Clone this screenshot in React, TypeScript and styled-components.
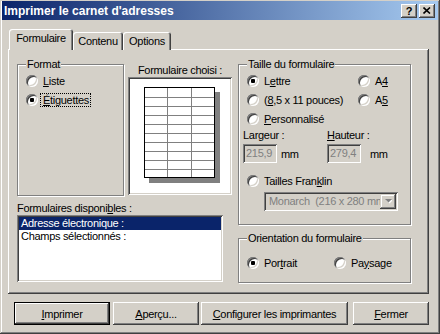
import React from "react";
import styled, { createGlobalStyle } from "styled-components";

const GlobalStyle = createGlobalStyle`
  html, body {
    margin: 0;
    padding: 0;
    background: #d4d0c8;
  }
  body {
    font-family: "Liberation Sans", Arial, sans-serif;
    font-size: 11px;
    letter-spacing: -0.3px;
    color: #000;
  }
  * {
    box-sizing: border-box;
  }
`;

const Window = styled.div`
  width: 440px;
  height: 334px;
  padding: 1px 2px 2px;
  background: #d4d0c8;
  box-shadow: inset -1px -1px 0 #404040, inset 1px 1px 0 #d4d0c8,
    inset -2px -2px 0 #808080, inset 2px 2px 0 #fff;
  display: flex;
  flex-direction: column;
`;

const TitleBar = styled.div`
  height: 19px;
  display: flex;
  align-items: center;
  padding: 0 3px 0 2px;
  background: linear-gradient(to right, #0a246a, #a6caf0);
`;

const Title = styled.span`
  flex: 1;
  color: #fff;
  font-weight: bold;
  font-size: 12px;
  letter-spacing: 0;
  white-space: nowrap;
`;

const CaptionButton = styled.div<{ $ml?: number }>`
  width: 16px;
  height: 14px;
  margin-left: ${(p) => p.$ml ?? 0}px;
  display: flex;
  align-items: center;
  justify-content: center;
  background: #d4d0c8;
  font-weight: bold;
  font-size: 11px;
  letter-spacing: 0;
  box-shadow: inset -1px -1px 0 #404040, inset 1px 1px 0 #fff,
    inset -2px -2px 0 #808080;
`;

const TabRow = styled.div`
  display: flex;
  align-items: flex-end;
  height: 21px;
  margin-top: 9px;
  padding-left: 7px;
  position: relative;
  z-index: 1;
`;

const Tab = styled.div<{ $active?: boolean; $w: number }>`
  width: ${(p) => p.$w}px;
  height: ${(p) => (p.$active ? 21 : 18)}px;
  padding-top: 3px;
  text-align: center;
  line-height: 13px;
  background: #d4d0c8;
  border-radius: 3px 3px 0 0;
  box-shadow: inset 1px 1px 0 #fff, inset -1px 0 0 #404040,
    inset -2px 0 0 #808080;
`;

const Panel = styled.div`
  margin: -1px 9px 0 6px;
  height: 245px;
  padding: 9px 0 0 9px;
  box-shadow: inset -1px -1px 0 #404040, inset 1px 1px 0 #fff,
    inset -2px -2px 0 #808080;
  display: grid;
  grid-template-columns: 215px 173px;
  column-gap: 6px;
  align-items: start;
`;

const Column = styled.div`
  display: flex;
  flex-direction: column;
`;

const TopRow = styled.div`
  display: flex;
  gap: 4px;
`;

const GroupBox = styled.fieldset<{ $w?: number; $h: number; $mb?: number }>`
  margin: 0 0 ${(p) => p.$mb ?? 0}px;
  padding: 0 0 0 8px;
  min-width: 0;
  width: ${(p) => (p.$w ? `${p.$w}px` : "auto")};
  height: ${(p) => p.$h}px;
  border: 1px solid #808080;
  box-shadow: inset 1px 1px 0 #fff, 1px 1px 0 #fff;
`;

const Legend = styled.legend`
  padding: 0 1px;
  line-height: 13px;
  background: #d4d0c8;
`;

const RadioLabel = styled.div`
  display: flex;
  align-items: center;
  height: 19px;
  white-space: nowrap;
`;

const RadioDot = styled.span<{ $checked?: boolean }>`
  position: relative;
  flex: none;
  width: 12px;
  height: 12px;
  margin-right: 2px;
  border-radius: 50%;
  background: #fff;
  box-shadow: inset 1px 1px 0 #808080, inset -1px -1px 0 #fff,
    inset 2px 2px 0 #404040, inset -2px -2px 0 #d4d0c8;

  &::after {
    content: "";
    display: ${(p) => (p.$checked ? "block" : "none")};
    position: absolute;
    left: 4px;
    top: 4px;
    width: 4px;
    height: 4px;
    border-radius: 1px;
    background: #000;
  }
`;

const RadioText = styled.span<{ $focus?: boolean }>`
  padding: 0 1px 0 2px;
  line-height: 12px;
  border: 1px dotted ${(p) => (p.$focus ? "#000" : "transparent")};
`;

const U = styled.span`
  text-decoration: underline;
`;

function Radio({
  checked,
  focus,
  children,
}: {
  checked?: boolean;
  focus?: boolean;
  children: React.ReactNode;
}) {
  return (
    <RadioLabel>
      <RadioDot $checked={checked} />
      <RadioText $focus={focus}>{children}</RadioText>
    </RadioLabel>
  );
}

const PreviewCol = styled.div`
  width: 104px;
  display: flex;
  flex-direction: column;
`;

const Caption = styled.div<{ $center?: boolean; $mt?: number }>`
  margin-top: ${(p) => p.$mt ?? 0}px;
  line-height: 13px;
  height: 13px;
  white-space: nowrap;
  text-align: ${(p) => (p.$center ? "center" : "left")};
`;

const Sunken = styled.div<{ $w?: number; $h: number; $white?: boolean }>`
  width: ${(p) => (p.$w ? `${p.$w}px` : "auto")};
  height: ${(p) => p.$h}px;
  padding: 2px;
  background: ${(p) => (p.$white ? "#fff" : "#d4d0c8")};
  box-shadow: inset 1px 1px 0 #808080, inset -1px -1px 0 #fff,
    inset 2px 2px 0 #404040, inset -2px -2px 0 #d4d0c8;
`;

const ListBox = styled(Sunken)`
  width: 206px;
`;

const ListItem = styled.div<{ $selected?: boolean }>`
  height: 13px;
  line-height: 13px;
  padding-left: 2px;
  white-space: nowrap;
  color: ${(p) => (p.$selected ? "#fff" : "#000")};
  background: ${(p) => (p.$selected ? "#0a246a" : "transparent")};
`;

const RadioGrid = styled.div<{ $cols: string; $pt?: number }>`
  display: grid;
  grid-template-columns: ${(p) => p.$cols};
  padding-top: ${(p) => p.$pt ?? 0}px;
`;

const Wide = styled.div`
  grid-column: 1 / -1;
`;

const SizeGrid = styled.div`
  display: grid;
  grid-template-columns: 84px auto;
  margin: 1px 0 0 -4px;
`;

const InputRow = styled.div<{ $gap: number }>`
  display: flex;
  align-items: center;
  gap: ${(p) => p.$gap}px;
  margin-top: 2px;
`;

const TextInput = styled(Sunken)`
  width: 34px;
  line-height: 15px;
  padding-left: 3px;
  color: #808080;
`;

const FranklinRow = styled.div`
  margin-top: 8px;
`;

const Combo = styled(Sunken)`
  width: 134px;
  margin: 2px 0 0 17px;
  display: flex;
  align-items: center;
  color: #808080;
  white-space: pre;
  overflow: hidden;
`;

const ComboText = styled.span`
  flex: 1;
  overflow: hidden;
  padding-left: 3px;
  line-height: 15px;
`;

const ComboButton = styled.div`
  flex: none;
  width: 16px;
  height: 15px;
  display: flex;
  align-items: center;
  justify-content: center;
  background: #d4d0c8;
  box-shadow: inset -1px -1px 0 #404040, inset 1px 1px 0 #d4d0c8,
    inset -2px -2px 0 #808080, inset 2px 2px 0 #fff;
`;

const ButtonRow = styled.div`
  display: flex;
  margin-top: 8px;
  padding-left: 12px;
`;

const Button = styled.div<{ $w: number; $ml?: number; $default?: boolean }>`
  width: ${(p) => p.$w}px;
  height: 23px;
  margin-left: ${(p) => p.$ml ?? 0}px;
  display: flex;
  align-items: center;
  justify-content: center;
  background: #d4d0c8;
  white-space: nowrap;
  box-shadow: ${(p) =>
    p.$default
      ? "inset 0 0 0 1px #000, inset -2px -2px 0 #404040, inset 2px 2px 0 #fff, inset -3px -3px 0 #808080"
      : "inset -1px -1px 0 #404040, inset 1px 1px 0 #fff, inset -2px -2px 0 #808080"};
`;

function LabelSheet() {
  const rows = Array.from({ length: 9 }, (_, i) => 8.5 + (i + 1) * 9.1);
  return (
    <svg width="100" height="114" shapeRendering="crispEdges">
      <rect x="19" y="13" width="71" height="91" fill="#808080" />
      <rect x="14.5" y="8.5" width="70" height="90" fill="#fff" stroke="#000" />
      {[37.5, 61.5].map((x) => (
        <line key={x} x1={x} y1="9" x2={x} y2="98" stroke="#808080" />
      ))}
      {rows.map((y) => (
        <line key={y} x1="15" y1={Math.round(y) + 0.5} x2="84" y2={Math.round(y) + 0.5} stroke="#808080" />
      ))}
    </svg>
  );
}

export default function App() {
  return (
    <>
      <GlobalStyle />
      <Window>
        <TitleBar>
          <Title>Imprimer le carnet d'adresses</Title>
          <CaptionButton>?</CaptionButton>
          <CaptionButton $ml={2}>
            <svg width="8" height="7" viewBox="0 0 8 7">
              <path d="M0.5 0.5 L7 6.5 M7 0.5 L0.5 6.5" stroke="#000" strokeWidth="1.6" />
            </svg>
          </CaptionButton>
        </TitleBar>

        <TabRow>
          <Tab $active $w={64}>Formulaire</Tab>
          <Tab $w={50}>Contenu</Tab>
          <Tab $w={48}>Options</Tab>
        </TabRow>

        <Panel>
          <Column>
            <TopRow>
              <GroupBox $w={107} $h={138}>
                <Legend>Format</Legend>
                <Radio>
                  <U>L</U>iste
                </Radio>
                <Radio checked focus>
                  <U>É</U>tiguettes
                </Radio>
              </GroupBox>
              <PreviewCol>
                <Caption $center $mt={6}>
                  Formulaire choisi :
                </Caption>
                <Sunken $h={118} $white>
                  <LabelSheet />
                </Sunken>
              </PreviewCol>
            </TopRow>
            <Caption $mt={6}>
              Formulaires disponi<U>b</U>les :
            </Caption>
            <ListBox $h={67} $white>
              <ListItem $selected>Adresse électronique :</ListItem>
              <ListItem>Champs sélectionnés :</ListItem>
            </ListBox>
          </Column>

          <Column>
            <GroupBox $h={167} $mb={7}>
              <Legend>Taille du formulaire</Legend>
              <RadioGrid $cols="111px auto">
                <Radio checked>
                  L<U>e</U>ttre
                </Radio>
                <Radio>
                  A<U>4</U>
                </Radio>
                <Radio>
                  (<U>8</U>,5 x 11 pouces)
                </Radio>
                <Radio>
                  A<U>5</U>
                </Radio>
                <Wide>
                  <Radio>
                    <U>P</U>ersonnalisé
                  </Radio>
                </Wide>
              </RadioGrid>
              <SizeGrid>
                <Caption>Largeur :</Caption>
                <Caption>
                  <U>H</U>auteur :
                </Caption>
                <InputRow $gap={4}>
                  <TextInput $h={19}>215,9</TextInput>
                  <span>mm</span>
                </InputRow>
                <InputRow $gap={9}>
                  <TextInput $h={19}>279,4</TextInput>
                  <span>mm</span>
                </InputRow>
              </SizeGrid>
              <FranklinRow>
                <Radio>
                  Tailles Fran<U>k</U>lin
                </Radio>
              </FranklinRow>
              <Combo $h={19}>
                <ComboText>Monarch  (216 x 280 mm)</ComboText>
                <ComboButton>
                  <svg width="7" height="5" viewBox="0 0 7 5">
                    <path d="M1 1 H8 L4.5 4.5 Z" fill="#fff" />
                    <path d="M0 0 H7 L3.5 3.5 Z" fill="#808080" />
                  </svg>
                </ComboButton>
              </Combo>
            </GroupBox>
            <GroupBox $h={51}>
              <Legend>Orientation du formulaire</Legend>
              <RadioGrid $cols="87px auto" $pt={8}>
                <Radio checked>
                  Por<U>t</U>rait
                </Radio>
                <Radio>
                  Pa<U>y</U>sage
                </Radio>
              </RadioGrid>
            </GroupBox>
          </Column>
        </Panel>

        <ButtonRow>
          <Button $w={96} $default>
            <span>
              <U>I</U>mprimer
            </span>
          </Button>
          <Button $w={86} $ml={3}>
            <span>
              <U>A</U>perçu...
            </span>
          </Button>
          <Button $w={147} $ml={2}>
            <span>
              <U>C</U>onfigurer les imprimantes
            </span>
          </Button>
          <Button $w={76} $ml={5}>
            <span>
              <U>F</U>ermer
            </span>
          </Button>
        </ButtonRow>
      </Window>
    </>
  );
}
